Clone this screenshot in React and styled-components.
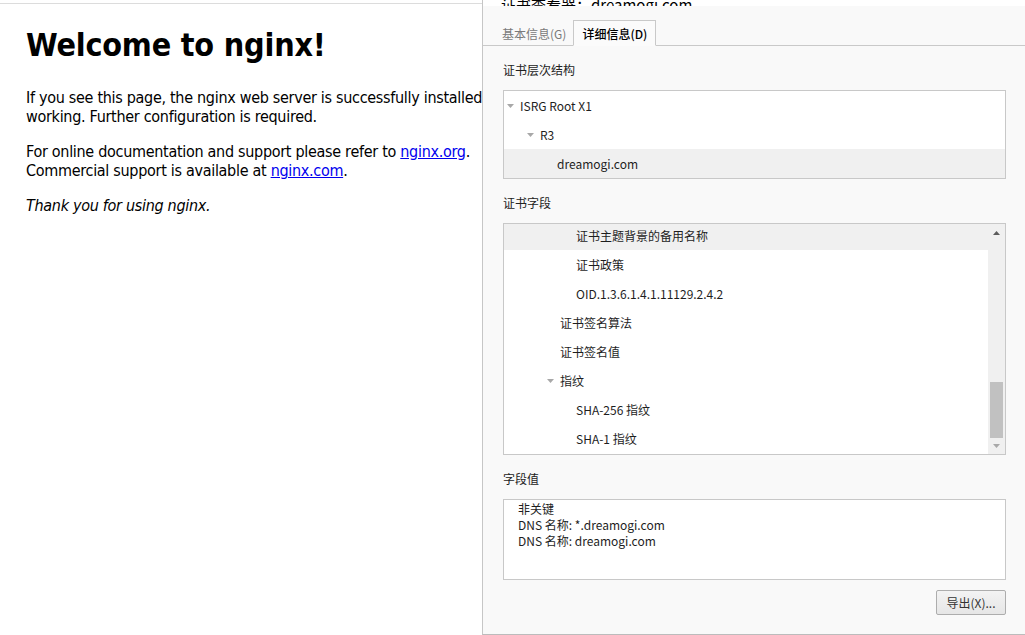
import React from "react";
import styled, { createGlobalStyle } from "styled-components";

const GlobalStyle = createGlobalStyle`
  html, body {
    margin: 0;
    padding: 0;
    background: #fff;
    overflow: hidden;
  }
`;

const Screen = styled.div`
  display: flex;
  width: 1025px;
  height: 635px;
`;

// left part: the browser page behind the dialog
const BrowserPane = styled.div`
  flex: none;
  width: 482px;
  padding-top: 3px;
  overflow: hidden;
`;

const PageBody = styled.div`
  width: 560px;
  height: 100%;
  border-top: 1px solid #dcdcdc;
  padding-left: 26px;
  font-family: "DejaVu Sans Condensed", "Liberation Sans", sans-serif;
  color: #000;
`;

const Heading = styled.h1`
  margin: 22px 0 23px;
  font-size: 32px;
  line-height: 39px;
  font-weight: bold;
  letter-spacing: -0.2px;
`;

const Para = styled.p`
  margin: 0 0 16px;
  font-size: 16px;
  line-height: 19px;
  letter-spacing: -0.3px;
  white-space: nowrap;
  font-style: ${(p) => (p.$italic ? "italic" : "normal")};
`;

const Link = styled.a`
  color: #0000ee;
  text-decoration: underline;
`;

// certificate viewer dialog
const Dialog = styled.div`
  flex: 1;
  display: flex;
  flex-direction: column;
  background: #f9f9f9;
  border-left: 1px solid #c6c6c6;
  border-bottom: 1px solid #bcbcbc;
  font-family: "Noto Sans CJK SC", "Open Sans", sans-serif;
  font-size: 12px;
  color: #1e1e1e;
`;

const TitleBar = styled.div`
  flex: none;
  height: 6px;
  background: #fff;
  display: flex;
  align-items: flex-end;
  padding-left: 18px;
  overflow: hidden;
  font-size: 15px;
  line-height: 3px;
  color: #000;
  white-space: nowrap;
`;

const TabStrip = styled.div`
  display: flex;
  align-items: flex-end;
  padding: 14px 0 0 12px;
  border-bottom: 1px solid #c9c9c9;
`;

const Tab = styled.div`
  height: 24px;
  padding: 0 ${(p) => (p.$active ? 8 : 6)}px;
  display: flex;
  align-items: center;
  margin-bottom: -1px;
  border: 1px solid ${(p) => (p.$active ? "#c9c9c9" : "transparent")};
  border-bottom-color: ${(p) => (p.$active ? "#fbfbfb" : "transparent")};
  background: ${(p) => (p.$active ? "#fbfbfb" : "transparent")};
  color: ${(p) => (p.$active ? "#000" : "#7a7a7a")};
  font-size: 12px;
  font-weight: ${(p) => (p.$active ? 500 : 400)};
`;

const Content = styled.div`
  flex: 1;
  display: flex;
  flex-direction: column;
  padding: 0 19px 0 20px;
`;

const Label = styled.div`
  margin: 16px 0 12px;
  line-height: 16px;
  color: #222;
`;

const Box = styled.div`
  border: 1px solid #c8c8c8;
  background: #fff;
  height: ${(p) => p.$h}px;
  box-sizing: border-box;
  overflow: hidden;
`;

const FieldsBox = styled(Box)`
  display: flex;
`;

const List = styled.div`
  flex: 1;
  overflow: hidden;
`;

const ScrolledRows = styled.div`
  margin-top: -3px;
`;

const Row = styled.div`
  height: 29px;
  display: flex;
  align-items: center;
  padding-left: ${(p) => p.$indent}px;
  background: ${(p) => (p.$selected ? "#f0f0f0" : "transparent")};
  color: #1e1e1e;
  white-space: nowrap;
`;

const Caret = styled.span`
  display: inline-flex;
  align-items: center;
  width: 13px;
  margin-left: -13px;
`;

const Scrollbar = styled.div`
  flex: none;
  width: 17px;
  background: #f0f0f0;
  display: flex;
  flex-direction: column;
  align-items: center;
`;

const ArrowSlot = styled.div`
  height: ${(p) => p.$h}px;
  display: flex;
  align-items: center;
  justify-content: center;
`;

const Track = styled.div`
  flex: 1;
  width: 100%;
  display: flex;
  flex-direction: column;
  justify-content: flex-end;
  align-items: center;
`;

const Thumb = styled.div`
  width: 13px;
  height: 56px;
  background: #c1c1c1;
`;

const ValueBox = styled(Box)`
  padding: 1px 0 0 14px;
  line-height: 16px;
  color: #1e1e1e;
`;

const Footer = styled.div`
  display: flex;
  justify-content: flex-end;
  margin-top: 10px;
`;

const Button = styled.button`
  width: 70px;
  height: 25px;
  border: 1px solid #adadad;
  border-radius: 2px;
  background: linear-gradient(#f3f3f3, #e6e6e6);
  font-family: "Noto Sans CJK SC", "Open Sans", sans-serif;
  font-size: 12px;
  color: #333;
  padding: 0;
`;

const Triangle = ({ dir = "down", color = "#a8a8a8" }) => (
  <svg width="7" height="4" viewBox="0 0 7 4">
    {dir === "down" ? (
      <polygon points="0,0 7,0 3.5,4" fill={color} />
    ) : (
      <polygon points="0,4 7,4 3.5,0" fill={color} />
    )}
  </svg>
);

const hierarchy = [
  { text: "ISRG Root X1", indent: 16, open: true },
  { text: "R3", indent: 36, open: true },
  { text: "dreamogi.com", indent: 53, selected: true },
];

const fields = [
  { text: "证书主题背景的备用名称", indent: 72, selected: true },
  { text: "证书政策", indent: 72 },
  { text: "OID.1.3.6.1.4.1.11129.2.4.2", indent: 72 },
  { text: "证书签名算法", indent: 56 },
  { text: "证书签名值", indent: 56 },
  { text: "指纹", indent: 56, open: true },
  { text: "SHA-256 指纹", indent: 72 },
  { text: "SHA-1 指纹", indent: 72 },
];

const TreeRow = ({ item }) => (
  <Row $indent={item.indent} $selected={item.selected}>
    {item.open && (
      <Caret>
        <Triangle />
      </Caret>
    )}
    {item.text}
  </Row>
);

export default function App() {
  return (
    <>
      <GlobalStyle />
      <Screen>
        <BrowserPane>
          <PageBody>
            <Heading>Welcome to nginx!</Heading>
            <Para>
              If you see this page, the nginx web server is successfully installed and
              <br />
              working. Further configuration is required.
            </Para>
            <Para>
              For online documentation and support please refer to{" "}
              <Link href="#">nginx.org</Link>.
              <br />
              Commercial support is available at <Link href="#">nginx.com</Link>.
            </Para>
            <Para $italic>Thank you for using nginx.</Para>
          </PageBody>
        </BrowserPane>

        <Dialog>
          <TitleBar>证书查看器：dreamogi.com</TitleBar>
          <TabStrip>
            <Tab>基本信息(G)</Tab>
            <Tab $active>详细信息(D)</Tab>
          </TabStrip>
          <Content>
            <Label>证书层次结构</Label>
            <Box $h={89}>
              {hierarchy.map((item) => (
                <TreeRow key={item.text} item={item} />
              ))}
            </Box>

            <Label>证书字段</Label>
            <FieldsBox $h={232}>
              <List>
                <ScrolledRows>
                  {fields.map((item) => (
                    <TreeRow key={item.text} item={item} />
                  ))}
                </ScrolledRows>
              </List>
              <Scrollbar>
                <ArrowSlot $h={18}>
                  <Triangle dir="up" color="#5c5c5c" />
                </ArrowSlot>
                <Track>
                  <Thumb />
                </Track>
                <ArrowSlot $h={16}>
                  <Triangle color="#a8a8a8" />
                </ArrowSlot>
              </Scrollbar>
            </FieldsBox>

            <Label>字段值</Label>
            <ValueBox $h={81}>
              非关键
              <br />
              DNS 名称: *.dreamogi.com
              <br />
              DNS 名称: dreamogi.com
            </ValueBox>

            <Footer>
              <Button>导出(X)...</Button>
            </Footer>
          </Content>
        </Dialog>
      </Screen>
    </>
  );
}
